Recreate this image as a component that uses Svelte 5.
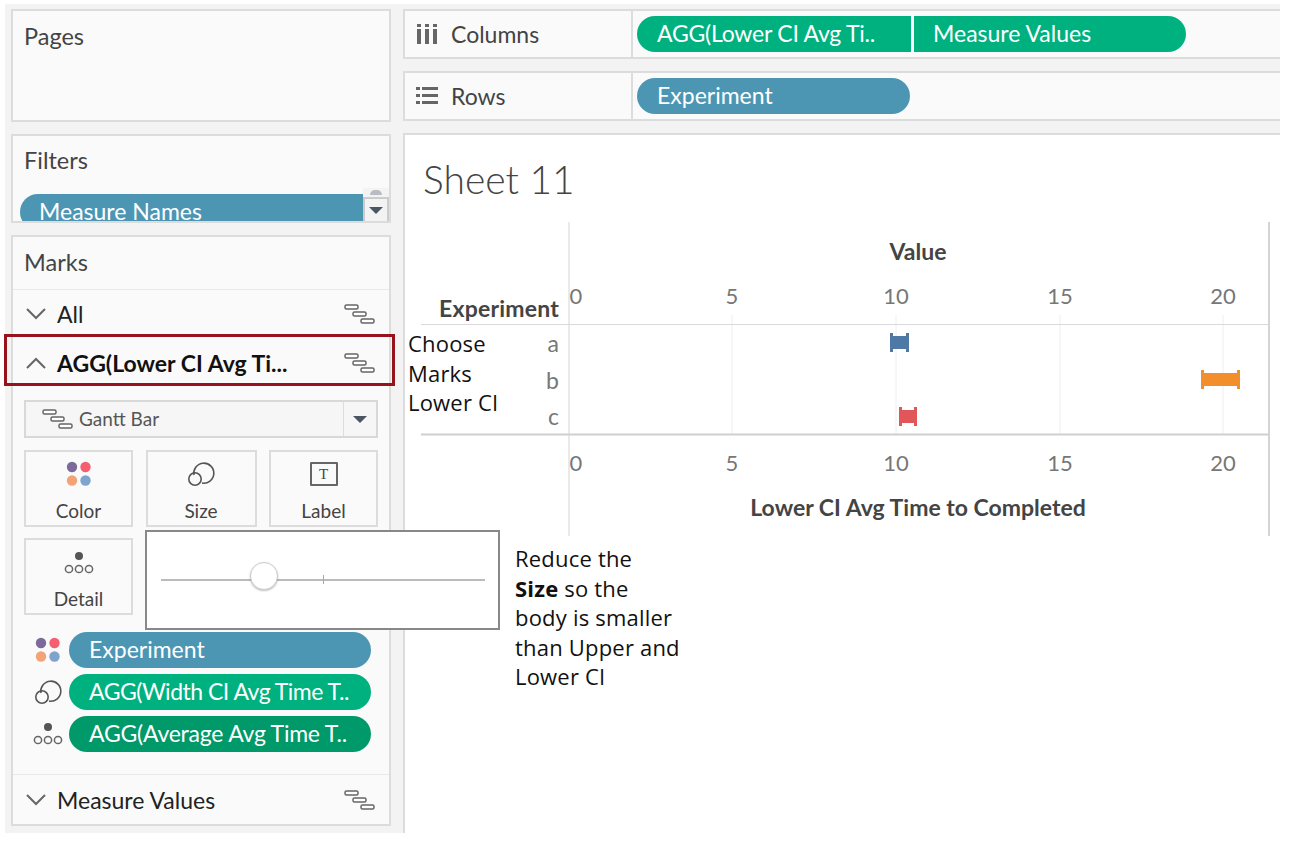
<script>
	const ticks = [
		{ v: 0, x: 576 },
		{ v: 5, x: 732 },
		{ v: 10, x: 896 },
		{ v: 15, x: 1060 },
		{ v: 20, x: 1223 }
	];
	const gantt = [
		{ name: 'a', y: 345, top: 333, x1: 890, x2: 909, color: '#4e79a7' },
		{ name: 'b', y: 382, top: 370, x1: 1201, x2: 1240, color: '#f28e2b' },
		{ name: 'c', y: 418, top: 407, x1: 899, x2: 917, color: '#e15759' }
	];
	const noteLines = ['Choose', 'Marks', 'Lower CI'];
</script>

{#snippet ganttIcon()}
	<svg class="gicon" width="32" height="22" viewBox="0 0 32 22" fill="#fff" stroke="#666" stroke-width="1.5">
		<rect x="1" y="2" width="13" height="4" rx="1.5" />
		<rect x="9" y="9" width="13" height="4" rx="1.5" />
		<rect x="17" y="16" width="13" height="4" rx="1.5" />
	</svg>
{/snippet}

{#snippet chevron(up)}
	<svg class="chev" width="22" height="14" viewBox="0 0 22 14" fill="none" stroke="#666" stroke-width="2">
		{#if up}
			<path d="M2 12 L11 3 L20 12" />
		{:else}
			<path d="M2 2 L11 11 L20 2" />
		{/if}
	</svg>
{/snippet}

{#snippet colorIcon()}
	<svg width="26" height="26" viewBox="0 0 26 26">
		<circle cx="6" cy="6" r="5.2" fill="#7d6a9b" />
		<circle cx="19.500" cy="6" r="5.2" fill="#f4606f" />
		<circle cx="6" cy="19.500" r="5.2" fill="#f2a477" />
		<circle cx="19.500" cy="19.500" r="5.2" fill="#7ea3cd" />
	</svg>
{/snippet}

{#snippet sizeIcon()}
	<svg width="28" height="26" viewBox="0 0 28 26" fill="none" stroke="#555" stroke-width="1.6">
		<path d="M7 14 A10 10 0 1 1 15 22" />
		<circle cx="8" cy="18" r="6.200" />
	</svg>
{/snippet}

{#snippet detailIcon()}
	<svg width="30" height="24" viewBox="0 0 30 24" fill="none" stroke="#666" stroke-width="1.5">
		<circle cx="15" cy="5" r="4" fill="#555" stroke="none" />
		<circle cx="5" cy="18" r="3.600" />
		<circle cx="15" cy="18" r="3.600" />
		<circle cx="25" cy="18" r="3.600" />
	</svg>
{/snippet}

<div class="page">
	<aside class="side">
		<section class="card pages">
			<h3>Pages</h3>
		</section>

		<section class="card filters">
			<h3>Filters</h3>
			<div class="filter-pill">Measure Names</div>
			<div class="scroll-cap"></div>
			<div class="filter-drop"><span class="caret"></span></div>
		</section>

		<section class="card marks">
			<h3 class="marks-title">Marks</h3>
			<div class="mark-row">
				{@render chevron(false)}
				<span class="mark-name">All</span>
				{@render ganttIcon()}
			</div>
			<div class="mark-row selected">
				{@render chevron(true)}
				<span class="mark-name">AGG(Lower CI Avg Ti...</span>
				{@render ganttIcon()}
			</div>

			<div class="mark-body">
				<div class="type-select">
					<span class="type-icon">{@render ganttIcon()}</span>
					<span class="type-name">Gantt Bar</span>
					<span class="type-drop"><span class="caret"></span></span>
				</div>

				<div class="mark-buttons">
					<div class="mbtn">
						<span class="mbtn-icon">{@render colorIcon()}</span>
						<span>Color</span>
					</div>
					<div class="mbtn">
						<span class="mbtn-icon">{@render sizeIcon()}</span>
						<span>Size</span>
					</div>
					<div class="mbtn">
						<span class="mbtn-icon"><span class="t-box">T</span></span>
						<span>Label</span>
					</div>
					<div class="mbtn">
						<span class="mbtn-icon">{@render detailIcon()}</span>
						<span>Detail</span>
					</div>
				</div>

				<div class="encodings">
					<div class="enc">
						<span class="enc-icon">{@render colorIcon()}</span>
						<span class="pill blue">Experiment</span>
					</div>
					<div class="enc">
						<span class="enc-icon">{@render sizeIcon()}</span>
						<span class="pill green tight">AGG(Width CI Avg Time T..</span>
					</div>
					<div class="enc">
						<span class="enc-icon">{@render detailIcon()}</span>
						<span class="pill dark snug">AGG(Average Avg Time T..</span>
					</div>
				</div>
			</div>

			<div class="mark-row last">
				{@render chevron(false)}
				<span class="mark-name">Measure Values</span>
				{@render ganttIcon()}
			</div>
		</section>
	</aside>

	<main class="main">
		<div class="shelf">
			<div class="shelf-label">
				<span class="shelf-icon">
					<svg width="20" height="22" viewBox="0 0 20 22" fill="#666">
						<rect x="0" y="1" width="4" height="3" />
						<rect x="8" y="1" width="4" height="3" />
						<rect x="16" y="1" width="4" height="3" />
						<rect x="0" y="6" width="4" height="15" />
						<rect x="8" y="6" width="4" height="15" />
						<rect x="16" y="6" width="4" height="15" />
					</svg>
				</span>
				<span>Columns</span>
			</div>
			<div class="shelf-pills">
				<span class="pill green col-left snug">AGG(Lower CI Avg Ti..</span>
				<span class="pill green col-right">Measure Values</span>
			</div>
		</div>
		<div class="shelf">
			<div class="shelf-label">
				<span class="shelf-icon">
					<svg width="22" height="22" viewBox="0 0 22 22" fill="#666">
						<rect x="0" y="2" width="4" height="3" />
						<rect x="6" y="2" width="16" height="3" />
						<rect x="0" y="9" width="4" height="3" />
						<rect x="6" y="9" width="16" height="3" />
						<rect x="0" y="16" width="4" height="3" />
						<rect x="6" y="16" width="16" height="3" />
					</svg>
				</span>
				<span>Rows</span>
			</div>
			<div class="shelf-pills">
				<span class="pill blue row-pill">Experiment</span>
			</div>
		</div>

		<section class="sheet">
			<h1>Sheet 11</h1>
			<svg class="chart" width="877" height="314" viewBox="403 222 877 314">
				<line x1="569" y1="222" x2="569" y2="536" stroke="#d4d4d4" />
				<line x1="1269" y1="222" x2="1269" y2="536" stroke="#d4d4d4" stroke-width="2" />
				{#each ticks.slice(1) as t}
					<line x1={t.x} y1="315" x2={t.x} y2="434" stroke="#eeeeee" />
				{/each}
				<line x1="421" y1="324.500" x2="1269" y2="324.500" stroke="#d9d9d9" />
				<line x1="421" y1="434.500" x2="1269" y2="434.500" stroke="#cfcfcf" stroke-width="2" />

				<text class="axis-title" x="918" y="260" text-anchor="middle">Value</text>
				<text class="axis-title spaced" x="559" y="317" text-anchor="end">Experiment</text>
				<text class="axis-title" x="918" y="516" text-anchor="middle">Lower CI Avg Time to Completed</text>

				{#each ticks as t}
					<text class="tick" x={t.x} y="304" text-anchor="middle">{t.v}</text>
					<text class="tick" x={t.x} y="471" text-anchor="middle">{t.v}</text>
				{/each}

				{#each gantt as g}
					<text class="tick row-name" x="559" y={g.y + 7} text-anchor="end">{g.name}</text>
					<rect x={g.x1} y={g.top} width="3" height="19" fill={g.color} />
					<rect x={g.x2 - 3} y={g.top} width="3" height="19" fill={g.color} />
					<rect x={g.x1} y={g.top + 3} width={g.x2 - g.x1} height="13" fill={g.color} />
				{/each}
			</svg>
		</section>
	</main>

	<div class="selected-box"></div>

	<div class="note-marks">
		{#each noteLines as l}
			<div>{l}</div>
		{/each}
	</div>

	<div class="size-pop">
		<div class="track"></div>
		<div class="track-tick"></div>
		<div class="thumb"></div>
	</div>

	<div class="note-size">
		Reduce the<br />
		<b>Size</b> so the<br />
		body is smaller<br />
		than Upper and<br />
		Lower CI
	</div>
</div>

<style>
	:global(body) {
		background: #fff;
	}

	.page {
		position: relative;
		display: flex;
		width: 1292px;
		height: 842px;
		box-sizing: border-box;
		padding: 4px 12px 9px 5px;
		font-family: Lato, "Liberation Sans", sans-serif;
		color: #333;
		background: #fff;
		overflow: hidden;
	}

	h1, h3 {
		margin: 0;
		font-weight: 400;
	}

	.side {
		width: 398px;
		box-sizing: border-box;
		padding: 5px 12px 7px 6px;
		display: flex;
		flex-direction: column;
		gap: 12px;
		background: #f3f3f3;
		flex: none;
	}

	.card {
		position: relative;
		background: #fafafa;
		border: 2px solid #dcdcdc;
		box-sizing: border-box;
		overflow: hidden;
		flex: none;
	}

	.card h3 {
		font-size: 23.500px;
		line-height: 28px;
		color: #444;
		padding: 11px 11px 0;
	}

	.pages {
		height: 113px;
	}

	.filters {
		height: 89px;
	}

	.filters h3 {
		padding-top: 10px;
	}

	.filter-pill {
		margin: 20px 0 0 7px;
		width: 360px;
		height: 36px;
		line-height: 35px;
		border-radius: 18px 0 0 18px;
		background: #4c96b4;
		color: #fff;
		font-size: 23px;
		padding-left: 19px;
		box-sizing: border-box;
	}

	.filter-drop {
		position: absolute;
		right: 0;
		top: 61px;
		width: 26px;
		height: 26px;
		box-sizing: border-box;
		background: #f3f3f3;
		border: 2px solid #ccc;
		display: flex;
		align-items: center;
		justify-content: center;
	}

	.scroll-cap {
		position: absolute;
		right: 0;
		top: 52px;
		width: 26px;
		height: 9px;
		background: #f3f3f3;
	}

	.scroll-cap::after {
		content: "";
		position: absolute;
		left: 7px;
		top: 2px;
		width: 12px;
		height: 5px;
		border-radius: 6px 6px 0 0;
		background: #b8bcc4;
	}

	.caret {
		width: 0;
		height: 0;
		border-left: 7px solid transparent;
		border-right: 7px solid transparent;
		border-top: 7px solid #4b5563;
	}

	.marks {
		flex: 1;
		display: flex;
		flex-direction: column;
	}

	.marks-title {
		height: 53px;
		box-sizing: border-box;
		border-bottom: 1px solid #e8e8e8;
	}

	.mark-row {
		height: 48px;
		flex: none;
		display: flex;
		align-items: center;
		padding: 0 13px 0 12px;
		font-size: 23px;
		color: #222;
	}

	.mark-row.selected {
		height: 49px;
		font-weight: 700;
		color: #111;
	}

	.mark-row.last {
		height: 49px;
		border-top: 1px solid #e8e8e8;
	}

	.mark-name {
		flex: 1;
		margin-left: 10px;
	}

	.mark-body {
		flex: 1;
		padding: 13px 11px 0;
	}

	.type-select {
		display: flex;
		align-items: center;
		height: 38px;
		box-sizing: border-box;
		background: #f6f6f6;
		border: 2px solid #d8d8d8;
		font-size: 19px;
		color: #555;
	}

	.type-icon {
		display: flex;
		margin-left: 16px;
	}

	.type-name {
		flex: 1;
		margin-left: 5px;
		padding-bottom: 2px;
	}

	.type-drop {
		width: 32px;
		height: 100%;
		border-left: 1px solid #ddd;
		display: flex;
		align-items: center;
		justify-content: center;
	}

	.mark-buttons {
		display: grid;
		grid-template-columns: 109px 111px 109px;
		justify-content: space-between;
		row-gap: 11px;
		margin-top: 12px;
	}

	.mbtn {
		height: 77px;
		box-sizing: border-box;
		border: 2px solid #dcdcdc;
		background: #fafafa;
		display: flex;
		flex-direction: column;
		align-items: center;
		font-size: 19px;
		color: #444;
	}

	.mbtn-icon {
		height: 35px;
		display: flex;
		align-items: flex-end;
		margin-bottom: 12px;
	}

	.t-box {
		width: 24px;
		height: 20px;
		border: 2px solid #666;
		border-radius: 1px;
		font-family: "Liberation Serif", serif;
		font-size: 15px;
		line-height: 20px;
		text-align: center;
		margin-bottom: 1px;
	}

	.encodings {
		display: flex;
		flex-direction: column;
		gap: 6px;
		margin-top: 17px;
	}

	.enc {
		display: flex;
		align-items: center;
		height: 36px;
	}

	.enc-icon {
		width: 45px;
		box-sizing: border-box;
		padding-left: 2px;
		display: flex;
		justify-content: center;
	}

	.pill {
		display: block;
		height: 36px;
		line-height: 35px;
		box-sizing: border-box;
		color: #fff;
		font-size: 23px;
		padding-left: 20px;
		white-space: nowrap;
	}

	.tight {
		letter-spacing: -0.5px;
	}

	.snug {
		letter-spacing: -0.23px;
	}

	.enc .pill {
		width: 302px;
		border-radius: 18px;
	}

	.blue {
		background: #4c96b4;
	}

	.green {
		background: #00b180;
	}

	.dark {
		background: #00996a;
	}

	.main {
		flex: 1;
		background: #f3f3f3;
		padding-top: 5px;
		display: flex;
		flex-direction: column;
		gap: 12px;
	}

	.shelf {
		display: flex;
		height: 50px;
		flex: none;
		box-sizing: border-box;
		background: #fafafa;
		border-top: 2px solid #dcdcdc;
		border-bottom: 2px solid #dcdcdc;
		border-left: 2px solid #dcdcdc;
	}

	.shelf-label {
		width: 228px;
		box-sizing: border-box;
		border-right: 2px solid #dcdcdc;
		display: flex;
		align-items: center;
		gap: 13px;
		padding-left: 11px;
		font-size: 23px;
		color: #444;
	}

	.shelf-icon {
		width: 22px;
		display: flex;
		justify-content: center;
	}

	.shelf-pills {
		display: flex;
		align-items: center;
		gap: 3px;
		padding-left: 4px;
	}

	.col-left {
		width: 274px;
		padding-left: 20px;
		border-radius: 18px 0 0 18px;
	}

	.col-right {
		width: 272px;
		padding-left: 19px;
		border-radius: 0 18px 18px 0;
	}

	.row-pill {
		width: 273px;
		border-radius: 18px;
	}

	.sheet {
		flex: 1;
		background: #fff;
		border-top: 2px solid #dcdcdc;
		border-left: 2px solid #dcdcdc;
	}

	.sheet h1 {
		font-size: 39px;
		line-height: 46px;
		font-weight: 300;
		color: #444;
		padding: 21px 0 0 18px;
		height: 87px;
		box-sizing: border-box;
	}

	.chart {
		display: block;
		margin-left: -2px;
	}

	.axis-title {
		font-size: 23px;
		font-weight: 700;
		fill: #444;
	}

	.spaced {
		letter-spacing: 0.2px;
	}

	.tick {
		font-size: 22px;
		fill: #777;
	}

	.row-name {
		font-size: 23px;
	}

	.selected-box {
		position: absolute;
		left: 4px;
		top: 334px;
		width: 391px;
		height: 52px;
		box-sizing: border-box;
		border: 3px solid #96121c;
	}

	.note-marks {
		position: absolute;
		left: 408px;
		top: 329px;
		font-family: "Open Sans", sans-serif;
		font-size: 22px;
		letter-spacing: 0.2px;
		line-height: 29.500px;
		color: #111;
	}

	.size-pop {
		position: absolute;
		left: 145px;
		top: 530px;
		width: 355px;
		height: 100px;
		box-sizing: border-box;
		background: #fff;
		border: 2px solid #888;
	}

	.track {
		position: absolute;
		left: 14px;
		top: 47px;
		width: 324px;
		height: 2px;
		background: #bbb;
	}

	.track-tick {
		position: absolute;
		left: 176px;
		top: 43px;
		width: 1px;
		height: 9px;
		background: #aaa;
	}

	.thumb {
		position: absolute;
		left: 103px;
		top: 30px;
		width: 28px;
		height: 28px;
		box-sizing: border-box;
		border-radius: 50%;
		background: #fff;
		border: 1px solid #ccc;
		box-shadow: 0 1px 2px rgba(0, 0, 0, 0.25);
	}

	.note-size {
		position: absolute;
		left: 515px;
		top: 544px;
		font-family: "Open Sans", sans-serif;
		font-size: 22px;
		letter-spacing: 0.2px;
		line-height: 29.500px;
		color: #111;
	}
</style>
